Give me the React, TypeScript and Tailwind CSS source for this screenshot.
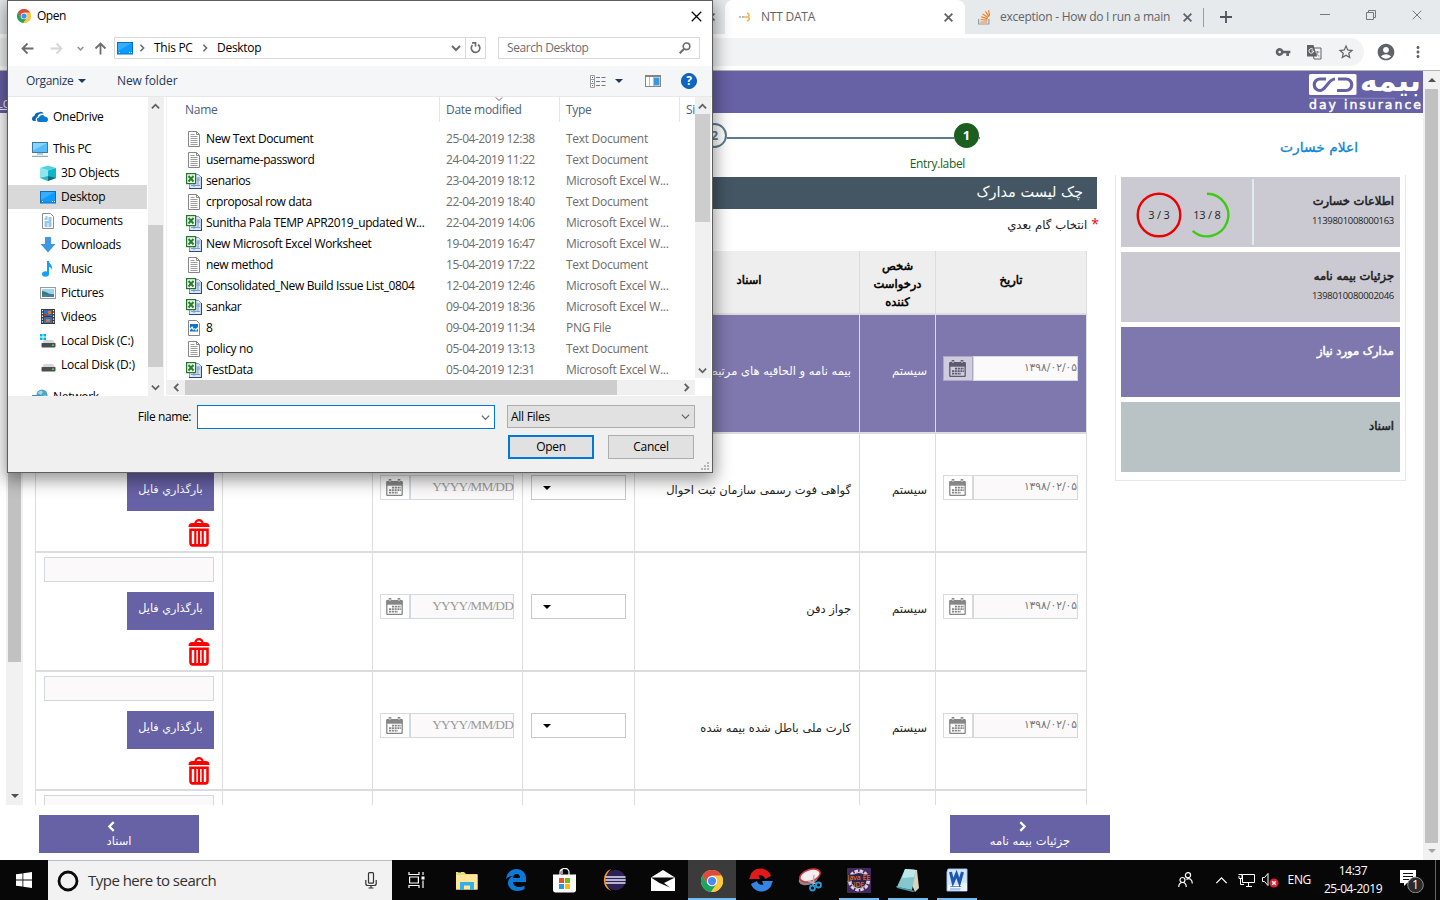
import React from 'react';
import { MdVpnKey, MdStarBorder, MdAccountCircle, MdMoreVert } from 'react-icons/md';

const fa = "font-['DejaVu_Sans',sans-serif]";
const faStrong = "font-['DejaVu_Sans',sans-serif] [-webkit-text-stroke:0.55px_currentColor]";

type ChevronProps = { dir: 'up' | 'down' | 'left' | 'right'; size?: number; color?: string; width?: number };

function Chevron({ dir, size = 8, color = '#606060', width = 2 }: ChevronProps) {
  const paths = {
    up: 'M1 7l4-4 4 4',
    down: 'M1 3l4 4 4-4',
    left: 'M7 1L3 5l4 4',
    right: 'M3 1l4 4-4 4',
  };
  return (
    <svg width={size} height={size} viewBox="0 0 10 10" fill="none" stroke={color} strokeWidth={width} className="shrink-0">
      <path d={paths[dir]} />
    </svg>
  );
}

function Caret({ up = false, color = '#505050', w = 8 }: { up?: boolean; color?: string; w?: number }) {
  return (
    <svg width={w} height={w / 2} viewBox="0 0 8 4" fill={color} className="shrink-0">
      <path d={up ? 'M0 4L4 0l4 4z' : 'M0 0h8L4 4z'} />
    </svg>
  );
}

function Cross({ size = 10, color = '#5f6368', width = 2 }: { size?: number; color?: string; width?: number }) {
  return (
    <svg width={size} height={size} viewBox="0 0 10 10" stroke={color} strokeWidth={width} className="shrink-0">
      <path d="M.7.7l8.6 8.6M9.3.7L.7 9.3" />
    </svg>
  );
}

function ChromeLogo({ size }: { size: number }) {
  return (
    <svg width={size} height={size} viewBox="0 0 24 24" className="shrink-0">
      <circle cx="12" cy="12" r="12" fill="#fbc93b" />
      <path d="M1.6 6A12 12 0 0 1 22.4 6L12 6.4 6.8 15z" fill="#dd4b3e" />
      <path d="M1.6 6A12 12 0 0 0 11 24l6-9-5 2.5-5-2.5z" fill="#1da362" />
      <path d="M12 6.4h10.6A12 12 0 0 1 11 24l6-9z" fill="#fbc93b" />
      <circle cx="12" cy="12" r="5.6" fill="#fff" />
      <circle cx="12" cy="12" r="4.5" fill="#4a8af4" />
    </svg>
  );
}

/* ---------- browser ---------- */

function TabStrip() {
  return (
    <div className="flex h-[34px] shrink-0 bg-[#e7eaed] text-[12px] tracking-[-0.22px] text-[#5f6368]">
      <div className="flex w-[725px] items-center justify-end rounded-br-lg pr-[10px]">
        <Cross size={8} />
      </div>
      <div className="flex w-[240px] items-center rounded-t-lg bg-white pr-[12px] pl-[14px]">
        <svg width="12" height="10" viewBox="0 0 12 10" className="mr-[10px]">
          <path d="M0 5h2M3 5h2" stroke="#b9bac6" strokeWidth="2" />
          <path d="M5 5h4M8 1c3 1 2 3 1 4 2 1 2 3-1 4" stroke="#f4b74a" strokeWidth="1.6" fill="none" />
        </svg>
        <span className="grow">NTT DATA</span>
        <Cross size={9} />
      </div>
      <div className="flex w-[238px] items-center pr-[11px] pl-[13px]">
        <svg width="12" height="15" viewBox="0 0 12 15" fill="none" className="mr-[10px]">
          <path d="M.6 9v5h10.3V9" stroke="#9a9c9e" strokeWidth="1.2" />
          <path d="M2.4 12h6.8M2.6 9.5l6.7.7M3.2 6.9l6.4 1.8M4.6 4l5.6 3.5M7.4 1.4l3.6 5.2M10.6.2l1 5.6" stroke="#f48024" strokeWidth="1.2" />
        </svg>
        <span className="w-[177px] overflow-hidden whitespace-nowrap tracking-[-0.26px]">exception - How do I run a main</span>
        <span className="ml-auto flex"><Cross size={9} /></span>
      </div>
      <div className="flex grow items-center">
        <span className="h-[19px] w-px bg-[#9a9da0]" />
        <svg width="12" height="12" viewBox="0 0 12 12" stroke="#505357" strokeWidth="1.8" className="ml-[16px]">
          <path d="M6 0v12M0 6h12" />
        </svg>
        <div className="mb-[5px] ml-auto flex items-center pr-[18px]">
          <span className="mr-[36px] h-px w-[10px] bg-[#777]" />
          <svg width="10" height="10" viewBox="0 0 10 10" fill="none" stroke="#777" className="mr-[36px]">
            <path d="M.5 2.5h7v7h-7zM2.5 2.5v-2h7v7h-2" />
          </svg>
          <Cross size={10} color="#777" width={1} />
        </div>
      </div>
    </div>
  );
}

function Toolbar() {
  return (
    <div className="flex h-[37px] shrink-0 items-center border-b border-[#b3b3b3] bg-white pr-[13px] text-[#5f6368]">
      <div className="flex h-[28px] w-[1364px] items-center justify-end rounded-r-full bg-[#f1f3f4] pr-[9px]">
        <MdVpnKey size={16} className="mr-[16px]" />
        <svg width="15" height="15" viewBox="0 0 15 15" className="mr-[15px]">
          <path d="M5 3h9v11H7z" fill="#f1f3f4" stroke="#5f6368" />
          <path d="M8.5 7h4M10.5 6v1c0 2-1 3-2 4M9 8c1 2 2 3 3.500 3" stroke="#80868b" fill="none" strokeWidth=".9" />
          <path d="M0 0h6.500L10 11.500H0z" fill="#5f6368" />
          <path d="M6 4.400A2.300 2.300 0 1 0 6.600 6H4.600" stroke="#fff" fill="none" />
        </svg>
        <MdStarBorder size={18} />
      </div>
      <MdAccountCircle size={20} className="ml-[12px]" />
      <MdMoreVert size={18} className="ml-auto" />
    </div>
  );
}

function InsuranceLogo() {
  return (
    <svg width="113" height="42" viewBox="0 0 113 42" className="mr-[1px]">
      <rect x="0" y="3" width="47.500" height="21" rx="1.500" fill="#fff" />
      <path d="M17 8h-6a5.500 5.500 0 0 0 0 11.500c6 0 8-11.500 15-11.500M29 8h8a5.700 5.700 0 0 1 0 11.500h-9" stroke="#6761a5" strokeWidth="3.200" fill="none" />
      <path d="M0 27.300h86" stroke="#8e89bd" strokeWidth="1" />
      <text x="112" y="20" direction="rtl" fontSize="30" fontWeight="bold" fill="#fff" textLength="61" lengthAdjust="spacingAndGlyphs" fontFamily="DejaVu Sans">بیمه</text>
      <text x="0" y="38" fontSize="12.500" fill="#fff" stroke="#fff" strokeWidth=".45" textLength="112" fontFamily="DejaVu Sans">day insurance</text>
    </svg>
  );
}

function Stepper() {
  return (
    <div className="flex h-[64px] shrink-0 flex-col pt-[10px] pr-[130px]">
      <div className="relative flex h-[25px] items-center justify-end">
        <div className="flex h-[25px] w-[25px] items-center justify-center rounded-full border-2 border-[#5c7b8c] text-[13px] font-bold text-[#5c7b8c]">2</div>
        <div className="mt-[4px] h-[2px] w-[227px] bg-[#5c7b8c]" />
        <div className="flex h-[25px] w-[25px] items-center justify-center rounded-full bg-[#1c5e20] text-[13px] font-bold text-white">1</div>
        <div className="mt-[4px] h-[2px] w-px bg-[#5c7b8c]" />
      </div>
      <div className="mt-[7px] pr-[15px] text-right text-[12px] leading-[18px] tracking-[-0.35px] text-[#1c5e20]">Entry.label</div>
    </div>
  );
}

function CalendarIcon({ color }: { color: string }) {
  return (
    <svg width="17" height="17" viewBox="0 0 17 17" className="mr-[2px] mb-px shrink-0">
      <path d="M.8 3.500h15.400v12c0 .6-.4 1-1 1H1.800c-.6 0-1-.4-1-1z" fill="none" stroke={color} strokeWidth="1.300" />
      <path d="M.5 2h16v4.700H.5z" fill={color} />
      <path d="M4 0v4M13 0v4" stroke={color} strokeWidth="2.600" />
      <path d="M4 1v2M13 1v2" stroke="#fff" strokeWidth=".8" />
      <path d="M6 8.700h9M3 11.200h12M3 13.700h9" stroke={color} strokeWidth="1.800" strokeDasharray="2.100 .7" />
    </svg>
  );
}

function DateField({ value, active = false, latin = false }: { value: string; active?: boolean; latin?: boolean }) {
  return (
    <div className="mt-[41px] flex h-[25px]">
      <div className={active ? 'flex w-[30px] shrink-0 items-center justify-center border border-[#aaa8c4] bg-[#cfcce0]' : 'flex w-[30px] shrink-0 items-center justify-center border border-[#dadada] bg-white'}>
        <CalendarIcon color={active ? '#5b596b' : '#868686'} />
      </div>
      <div className="flex grow items-start justify-end border border-[#d0d9df] bg-[#fbf9fa]">
        {latin ? (
          <span className="font-['Liberation_Serif',serif] text-[13.330px] leading-[21px] tracking-[-0.8px] text-[#9a9a9a]">{value}</span>
        ) : (
          <span dir="rtl" className="font-['DejaVu_Sans',sans-serif] text-[10.700px] leading-[21px] whitespace-nowrap text-[#777]">{value}</span>
        )}
      </div>
    </div>
  );
}

function TrashIcon() {
  return (
    <svg width="22" height="28" viewBox="0 0 22 28" className="mt-[8px] mr-[4px]">
      <path d="M7.500 5V4a3.500 2.800 0 0 1 7 0v1" fill="none" stroke="red" strokeWidth="2.200" />
      <path d="M.5 8C.5 5 2 4 4 4h14c2 0 3.500 1 3.500 4z" fill="red" />
      <path d="M2.500 10.800h17v13.200c0 1.500-.8 2.400-2.200 2.400H4.700c-1.400 0-2.200-.9-2.200-2.400z" fill="none" stroke="red" strokeWidth="2.600" />
      <path d="M7.300 11v15M11 11v15M14.700 11v15" stroke="red" strokeWidth="2.200" />
    </svg>
  );
}

type DocRow = { doc: string; active?: boolean };
const rows: DocRow[] = [
  { doc: 'بیمه نامه و الحاقیه های مرتبط', active: true },
  { doc: 'گواهی فوت رسمی سازمان ثبت احوال' },
  { doc: 'جواز دفن' },
  { doc: 'کارت ملی باطل شده بیمه شده' },
  { doc: '' },
];

const cell = 'border-r border-[#dcdcdc] shrink-0';

function TableRow({ doc, active = false }: DocRow) {
  const tone = active ? 'bg-[#7e78ae] text-white' : 'bg-white text-[#222]';
  return (
    <div className={`flex h-[119px] shrink-0 border-b-2 border-[#dcdcdc] text-[12px] ${tone}`}>
      <div className={`${cell} flex w-[187px] flex-col items-end px-[8px] pt-[4px]`}>
        <div className="h-[25px] w-[170px] border border-[#d0d9df] bg-[#fbf9fa]" />
        <div dir="rtl" className={`${fa} mt-[10px] h-[38px] w-[87px] bg-[#6761a5] text-center text-[11.200px] leading-[33px] whitespace-nowrap text-white`}>بارگذاري فايل</div>
        <TrashIcon />
      </div>
      <div className={`${cell} w-[150px]`} />
      <div className={`${cell} w-[150px] pr-[8px] pl-[7px]`}>
        <DateField value="YYYY/MM/DD" latin active={active} />
      </div>
      <div className={`${cell} w-[112px] pr-[8px] pl-[8px]`}>
        <div className="mt-[41px] flex h-[25px] items-center border border-[#c8c8c8] bg-white pl-[11px]"><Caret color="#000" /></div>
      </div>
      <div dir="rtl" className={`${cell} ${fa} w-[225px] overflow-hidden pt-[47px] pr-[8px] text-[11.500px] leading-[18px] whitespace-nowrap`}>{doc}</div>
      <div dir="rtl" className={`${cell} ${fa} w-[76px] pt-[47px] pr-[8px] text-[11.700px] leading-[18px]`}>{doc && 'سیستم'}</div>
      <div className={`${cell} w-[151px] pr-[8px] pl-[7px]`}>{doc && <DateField value="۱۳۹۸/۰۲/۰۵" active={active} />}</div>
    </div>
  );
}

function TableHead() {
  const head = `${cell} ${faStrong} flex items-center justify-center text-center text-[11.500px] text-black leading-[18px]`;
  return (
    <div dir="ltr" className="flex h-[64px] shrink-0 border-b-2 border-[#dcdcdc] bg-[#eee]">
      <div className={`${head} w-[187px]`} />
      <div className={`${head} w-[150px]`} />
      <div className={`${head} w-[150px]`} />
      <div className={`${head} w-[112px]`} />
      <div dir="rtl" className={`${head} w-[225px] pb-[4px] pl-[4px]`}>اسناد</div>
      <div dir="rtl" className={`${head} w-[76px] px-[8px] pt-[4px]`}>شخص درخواست کننده</div>
      <div dir="rtl" className={`${head} w-[151px] pb-[4px]`}>تاریخ</div>
    </div>
  );
}

function NavButton({ dir, label }: { dir: 'left' | 'right'; label: string }) {
  return (
    <div className="flex h-[38px] w-[160px] flex-col items-center bg-[#6761a5] pt-[5px] text-white">
      <span className="mr-[16px] flex h-[12px] items-center"><Chevron dir={dir} size={11} color="#fff" width={2} /></span>
      <span dir="rtl" className={`${fa} text-[11.500px] leading-[18px] whitespace-nowrap`}>{label}</span>
    </div>
  );
}

function SideCard({ title, number, tone, rings = false }: { title: string; number?: string; tone: string; rings?: boolean }) {
  return (
    <div className={`flex h-[70px] ${tone}`}>
      {rings && (
        <div className="mt-[2px] mb-[2px] flex w-[133px] items-center gap-[2px] border-r-2 border-[#dfeaf2] pt-[6px] pl-[15px]">
          <svg width="46" height="46" viewBox="0 0 46 46">
            <circle cx="23" cy="23" r="21.300" fill="none" stroke="#e90000" strokeWidth="2.400" />
            <text x="23" y="27" textAnchor="middle" fontSize="11" fill="#222" letterSpacing="-0.2">3 / 3</text>
          </svg>
          <svg width="46" height="46" viewBox="0 0 46 46">
            <path d="M23 1.700A21.300 21.300 0 1 1 8.700 38.800" fill="none" stroke="#3fcb12" strokeWidth="2.400" />
            <text x="23" y="27" textAnchor="middle" fontSize="11" fill="#222" letterSpacing="-0.2">13 / 8</text>
          </svg>
        </div>
      )}
      <div className="flex grow flex-col items-end pt-[15px] pr-[6px]">
        <span dir="rtl" className={`${faStrong} text-[11.500px] leading-[18px]`}>{title}</span>
        <span className="mt-[2px] text-[9.500px] leading-[18px] tracking-[-0.3px]">{number}</span>
      </div>
    </div>
  );
}

function Page() {
  return (
    <div className="flex h-[789px] shrink-0">
      <div className="flex w-[1423px] flex-col bg-white">
        <div className="flex h-[42px] shrink-0 items-start bg-[#6761a5]">
          <span className="mt-[25px] -ml-[3px] text-[11px] text-white underline">LO</span>
          <div className="ml-auto"><InsuranceLogo /></div>
        </div>
        <div className="flex grow">
          <div className="flex w-[1110px] shrink-0 flex-col">
            <div className="flex h-[692px] overflow-hidden">
              <div className="ml-[6px] flex w-[17px] flex-col items-center justify-between bg-[#f1f1f1] pb-[7px]">
                <div className="h-[549px] w-[13px] bg-[#c1c1c1]" />
                <Caret />
              </div>
              <div className="ml-[12px] flex grow flex-col">
                <Stepper />
                <div dir="rtl" className={`${fa} mr-[13px] h-[32px] shrink-0 bg-[#445664] pr-[14px] text-[14.500px] leading-[31px] text-white`}>چک لیست مدارک</div>
                <div dir="rtl" className="flex h-[42px] shrink-0 pt-[7px] pr-[11px] text-[#222]">
                  <span className="-mt-px text-[14px] leading-[18px] text-red-600">*</span>
                  <span className={`${fa} mr-[4px] text-[11.700px] leading-[18px]`}>انتخاب گام بعدي</span>
                </div>
                <div className="flex w-[1052px] flex-col border-l border-[#dcdcdc]">
                  <TableHead />
                  {rows.map((r, i) => <TableRow key={i} {...r} />)}
                </div>
              </div>
            </div>
            <div className="mt-[10px] flex justify-between pl-[39px]">
              <NavButton dir="left" label="اسناد" />
              <NavButton dir="right" label="جزئیات بیمه نامه" />
            </div>
          </div>
          <div className="ml-[4px] w-[292px]">
            <div dir="rtl" className="h-[62px] pt-[24px] pr-[48px] font-['DejaVu_Sans',sans-serif] text-[13.800px] leading-[20px] text-[#0b85d4] [-webkit-text-stroke:0.3px_currentColor]">اعلام خسارت</div>
            <div className="ml-px flex h-[306px] flex-col gap-[5px] border-x border-b border-[#e8e8e8] px-[5px] pt-[2px] text-[#222]">
              <SideCard title="اطلاعات خسارت" number="1139801008000163" tone="bg-[#cbcad2]" rings />
              <SideCard title="جزئیات بیمه نامه" number="1398010080002046" tone="bg-[#cbcad2]" />
              <SideCard title="مدارک مورد نیاز" tone="bg-[#7e78ae] text-white" />
              <SideCard title="اسناد" tone="bg-[#b9c3c6]" />
            </div>
          </div>
        </div>
      </div>
      <div className="flex w-[17px] flex-col items-center bg-[#f1f1f1] pt-[7px]">
        <Caret up />
        <div className="mt-[7px] mb-[6px] h-[754px] w-[13px] bg-[#c1c1c1]" />
        <Caret color="#a3a3a3" />
      </div>
    </div>
  );
}

/* ---------- file dialog ---------- */

function DesktopIcon() {
  return (
    <svg width="16" height="13" viewBox="0 0 16 13" className="shrink-0">
      <rect x=".5" y=".5" width="15" height="11.500" fill="#0d9bff" stroke="#0b6fc0" />
      <path d="M1 1h14L1 9z" fill="#35aeff" />
      <path d="M2 10.500h1M12 10.500h1M14 10.500h.8" stroke="#fff" />
    </svg>
  );
}

function DiskIcon({ windows = false }: { windows?: boolean }) {
  return (
    <svg width="16" height="16" viewBox="0 0 16 16">
      <path d="M4 7h9l2 3.500H2z" fill="#d4d6d8" />
      <rect x="1.500" y="10" width="14" height="4.500" rx=".8" fill="#4b4d50" />
      <rect x="12" y="11.500" width="2" height="1.300" fill="#58f04c" />
      {windows && <path d="M0 1h2.600v2.600H0zM3.400 1H6v2.600H3.400zM0 4.400h2.600V7H0zM3.400 4.400H6V7H3.400z" fill="#00b3f0" />}
    </svg>
  );
}

const placeIcons: Record<string, React.ReactNode> = {
  OneDrive: (
    <svg width="16" height="16" viewBox="0 0 16 16">
      <path d="M0 10c0-2 1.200-2.800 2.400-3C2.700 4.400 5 3 7 3.500 8 2 11 2.500 11.600 5 8 3.500 5.500 6 5.600 8 3.500 8.400 3.300 11 4 12 1 12.200 0 11.500 0 10z" fill="#0a64b8" />
      <path d="M5 11c-.4-1.500.6-2.600 2-2.600.3-2.600 4.600-3.600 5.800-.6C15 7.600 16 9 16 10.400S15 13 13.500 13H7c-1.200 0-2-.8-2-2z" fill="#0a78d4" />
    </svg>
  ),
  'This PC': (
    <svg width="16" height="16" viewBox="0 0 16 16">
      <rect x=".5" y="1.500" width="15" height="10" fill="#55bdf8" stroke="#3b7ba3" />
      <path d="M1 2h14L1 9.500z" fill="#85d3ff" />
      <path d="M5 13h6M0 15.300h16" stroke="#8296a3" />
    </svg>
  ),
  '3D Objects': (
    <svg width="16" height="16" viewBox="0 0 16 16">
      <path d="M0 3l8-2.500L16 3 8 5.500z" fill="#4fd3de" /><path d="M0 3l8 2.500V16l-8-3z" fill="#8fe5ec" /><path d="M16 3L8 5.500V16l8-3z" fill="#0fb4c8" /><path d="M8 11l8 2-8 3z" fill="#0b6e80" /><path d="M0 13l8-2v5z" fill="#35b4c2" />
    </svg>
  ),
  Desktop: <DesktopIcon />,
  Documents: (
    <svg width="16" height="16" viewBox="0 0 16 16">
      <path d="M2.500.5h8l3 3v12h-11z" fill="#fff" stroke="#8c8c8c" /><path d="M4.500 6h3M5.500 4h2M8.500 5h3M8.500 7h3M4.500 9h7M4.500 11h3M4.500 13h3M8.500 11h3M8.500 13h3" stroke="#2f8fd8" />
    </svg>
  ),
  Downloads: <svg width="16" height="16" viewBox="0 0 16 16"><path d="M5 0h6v7h4.500L8 15.500.5 7H5z" fill="#3f98e4" /></svg>,
  Music: (
    <svg width="16" height="16" viewBox="0 0 16 16">
      <ellipse cx="5.500" cy="13" rx="3.500" ry="2.800" fill="#14a0f5" /><path d="M7 0h2c0 3 4 3.500 3 9-.5-2-1.500-3-3-3v7H7z" fill="#14a0f5" />
    </svg>
  ),
  Pictures: (
    <svg width="16" height="16" viewBox="0 0 16 16">
      <rect x=".5" y="2.500" width="15" height="11" fill="#fff" stroke="#9a9a9a" /><path d="M2 4h12v8H2z" fill="#9fd2f4" /><path d="M2 6c4 0 7 4 12 3v3H2z" fill="#3d7b6c" /><path d="M2 10h12v2H2z" fill="#3f7fb8" />
    </svg>
  ),
  Videos: (
    <svg width="16" height="16" viewBox="0 0 16 16">
      <path d="M1 0h14v15H1z" fill="#3a3a3a" /><path d="M4 1h8v6H4zM4 8h8v6H4z" fill="#2f6fc9" /><path d="M8 2h3v3H8zM6 10h4v3H6z" fill="#d8762b" /><path d="M4 5h4v2H4z" fill="#a4422b" /><path d="M2.500 1v14M13.500 1v14" stroke="#fff" strokeWidth="1.200" strokeDasharray="1.300 1.500" />
    </svg>
  ),
  'Local Disk (C:)': <DiskIcon windows />,
  'Local Disk (D:)': <DiskIcon />,
  Network: (
    <svg width="16" height="16" viewBox="0 0 16 16">
      <circle cx="10" cy="6" r="5.500" fill="#4fa5d0" /><path d="M6 4c2-3 4-2 5-1l-2 3zM11 7l3-1-2 4z" fill="#a8dcd8" /><path d="M0 6h9v7H0z" fill="#3d8fc4" />
    </svg>
  ),
};

function Place({ name, indent = true }: { name: string; indent?: boolean }) {
  const selected = name === 'Desktop' ? 'bg-[#d9d9d9]' : '';
  const pad = indent ? 'pl-[32px] gap-[5px]' : 'pl-[24px] gap-[5px]';
  return (
    <div className={`flex h-[24px] shrink-0 items-center ${pad} ${selected}`}>
      <span className="flex w-[16px] justify-center">{placeIcons[name]}</span>
      <span className="whitespace-nowrap">{name}</span>
    </div>
  );
}

function FileIcon({ kind }: { kind: string }) {
  if (kind === 'Text Document') {
    return (
      <svg width="16" height="16" viewBox="0 0 16 16">
        <path d="M2.500.5h8l3 3v12h-11z" fill="#fff" stroke="#858585" /><path d="M10.500.5v3h3" fill="none" stroke="#858585" /><path d="M4.500 3.500h4M4.500 5.500h7M4.500 7.500h7M4.500 9.500h7M4.500 11.500h7M4.500 13.500h7" stroke="#9d9d9d" />
      </svg>
    );
  }
  if (kind === 'PNG File') {
    return (
      <svg width="16" height="16" viewBox="0 0 16 16">
        <path d="M2.500.5h8l3 3v12h-11z" fill="#fff" stroke="#858585" /><path d="M4 4h8v7.500H4z" fill="#0b72cf" /><path d="M4 8.500L6.200 6l1.600 3 1-1 1 1 2.200-2v1.500L10 11 8.500 9 7 10.500 6 8.200 4 10z" fill="#fff" />
      </svg>
    );
  }
  return (
    <svg width="16" height="16" viewBox="0 0 16 16">
      <path d="M3.500 1.500h9l3 3v11h-12z" fill="#dce8fa" stroke="#7d9acb" /><path d="M15.500 4v11.500H3" fill="none" stroke="#2a4880" strokeWidth="1.200" /><path d="M10.500 5h3.500M10.500 7h3.500M5 12.500h9M12 5v8M8 11v3" stroke="#7a9bd4" />
      <rect x=".6" y=".6" width="9" height="10" fill="#f3fbf2" stroke="#21762a" strokeWidth="1.200" /><path d="M2.500 3l5 5.500M7.500 3l-5 5.500" stroke="#23832c" strokeWidth="2" />
    </svg>
  );
}

const XL = 'Microsoft Excel W...';
const TXT = 'Text Document';
const files: [string, string, string][] = [
  ['New Text Document', '25-04-2019 12:38', TXT],
  ['username-password', '24-04-2019 11:22', TXT],
  ['senarios', '23-04-2019 18:12', XL],
  ['crproposal row data', '22-04-2019 18:40', TXT],
  ['Sunitha Pala TEMP APR2019_updated W...', '22-04-2019 14:06', XL],
  ['New Microsoft Excel Worksheet', '19-04-2019 16:47', XL],
  ['new method', '15-04-2019 17:22', TXT],
  ['Consolidated_New Build Issue List_0804', '12-04-2019 12:46', XL],
  ['sankar', '09-04-2019 18:36', XL],
  ['8', '09-04-2019 11:34', 'PNG File'],
  ['policy no', '05-04-2019 13:13', TXT],
  ['TestData', '05-04-2019 12:31', XL],
];

function Arrow({ dir, color }: { dir: 'left' | 'right' | 'up'; color: string }) {
  const d = { left: 'M12.500 6.500H1.500M6.500 1.500l-5 5 5 5', right: 'M.5 6.500h11M6.500 1.500l5 5-5 5', up: 'M6.500 12.500v-11M1.500 6.500l5-5 5 5' };
  return (
    <svg width="13" height="13" viewBox="0 0 13 13" fill="none" stroke={color} strokeWidth="1.800" className="shrink-0"><path d={d[dir]} /></svg>
  );
}

function FileDialog() {
  return (
    <div className="absolute top-0 left-[7px] flex h-[473px] w-[706px] flex-col border border-[#5e5e5e] bg-white text-[12px] tracking-[-0.28px] text-black shadow-[0_5px_16px_2px_rgba(0,0,0,0.42)]">
      <div className="flex h-[30px] shrink-0 items-center pr-[10px] pl-[9px]">
        <ChromeLogo size={14} />
        <span className="ml-[6px] grow tracking-[-0.5px]">Open</span>
        <Cross size={11} color="#000" width={1.100} />
      </div>
      <div className="flex h-[35px] shrink-0 items-center pb-[1px] pl-[13px]">
        <Arrow dir="left" color="#6d6d6d" />
        <span className="ml-[16px] flex"><Arrow dir="right" color="#d6d6d6" /></span>
        <span className="ml-[14px] flex"><Chevron dir="down" size={7} color="#8a8a8a" /></span>
        <span className="ml-[10px] flex"><Arrow dir="up" color="#6d6d6d" /></span>
        <div className="ml-[7px] flex h-[22px] w-[372px] items-center border border-[#d9d9d9] pl-[2px]">
          <DesktopIcon />
          <span className="ml-[5px] flex w-[16px]"><Chevron dir="right" size={8} color="#6b6b6b" /></span>
          <span className="w-[47px]">This PC</span>
          <span className="flex w-[16px]"><Chevron dir="right" size={8} color="#6b6b6b" /></span>
          <span>Desktop</span>
          <span className="mr-[4px] ml-auto flex"><Chevron dir="down" size={10} color="#6b6b6b" /></span>
          <div className="flex h-full w-[20px] items-center justify-center border-l border-[#d9d9d9]">
            <svg width="11" height="12" viewBox="0 0 11 12" fill="none" stroke="#6b6b6b" strokeWidth="1.700"><path d="M8 2.500A4.300 4.300 0 1 1 2.500 3M2 .9h3.500v3.600" /></svg>
          </div>
        </div>
        <div className="ml-[12px] flex h-[22px] w-[202px] items-center justify-between border border-[#d9d9d9] pr-[8px] pl-[8px] text-[#6d6d6d]">
          <span className="tracking-[-0.42px]">Search Desktop</span>
          <svg width="12" height="12" viewBox="0 0 12 12" fill="none" stroke="#6b6b6b" strokeWidth="1.600"><circle cx="7.500" cy="4.300" r="3.300" /><path d="M5.200 6.700L.7 11.300" strokeWidth="2" /></svg>
        </div>
      </div>
      <div className="flex h-[31px] shrink-0 items-center border-b border-[#e6e8ea] bg-[#f5f6f7] pl-[18px] text-[#1e395b]">
        <span className="w-[52px] tracking-[-0.35px]">Organize</span>
        <Caret color="#1e395b" />
        <span className="ml-[31px] tracking-[-0.1px]">New folder</span>
        <div className="ml-auto flex items-center pr-[15px]">
          <svg width="16" height="13" viewBox="0 0 16 13"><path d="M.5.5h4v12h-4zM.5 4.500h4M.5 8.500h4" fill="#fff" stroke="#999" /><path d="M6 2.500h10M6 6.500h10M6 10.500h10" stroke="#777" strokeDasharray="4 1.500" /><path d="M2 2.500h1" stroke="#44a" /><path d="M2 6.500h1" stroke="#28c" /><path d="M2 10.500h1" stroke="#d33" /></svg>
          <span className="ml-[9px] flex"><Caret color="#1e395b" /></span>
          <svg width="16" height="12" viewBox="0 0 16 12" className="ml-[22px]"><rect x=".5" y=".5" width="15" height="11" fill="#fff" stroke="#858585" /><path d="M0 1h16" stroke="#858585" strokeWidth="2" /><path d="M4.500 2v9M8.500 2v9" stroke="#bbb" /><path d="M9 2.500h5.500v8H9z" fill="#3997e0" /></svg>
          <svg width="16" height="16" viewBox="0 0 16 16" className="ml-[20px]"><circle cx="8" cy="8" r="7.600" fill="#0a67c7" stroke="#084b92" strokeWidth=".8" /><text x="8" y="12.200" fontSize="12" fontWeight="bold" fill="#fff" textAnchor="middle">?</text></svg>
        </div>
      </div>
      <div className="flex h-[299px] shrink-0">
        <div className="flex w-[139px] flex-col overflow-hidden pt-[8px]">
          <Place name="OneDrive" indent={false} />
          <div className="h-[8px] shrink-0" />
          <Place name="This PC" indent={false} />
          {['3D Objects', 'Desktop', 'Documents', 'Downloads', 'Music', 'Pictures', 'Videos', 'Local Disk (C:)', 'Local Disk (D:)'].map((n) => <Place key={n} name={n} />)}
          <div className="h-[8px] shrink-0" />
          <Place name="Network" indent={false} />
        </div>
        <div className="ml-[1px] flex w-[16px] flex-col items-center bg-[#f0f0f0] pt-[5px] pr-px">
          <Chevron dir="up" size={9} />
          <div className="mt-[114px] mb-[16px] h-[142px] w-full bg-[#cdcdcd]" />
          <Chevron dir="down" size={9} />
        </div>
        <div className="ml-[2px] flex w-[530px] flex-col overflow-hidden border-l border-[#f0f0f0]">
          <div className="flex h-[283px] shrink-0">
            <div className="flex w-[528px] flex-col overflow-hidden">
              <div className="flex h-[25px] shrink-0 items-center text-[#4c607a]">
                <span className="w-[272px] pl-[18px]">Name</span>
                <span className="relative flex h-full w-[120px] items-center border-l border-[#e5e5e5] pl-[6px]">
                  Date modified
                  <span className="absolute -top-[2px] left-[55px]"><Chevron dir="down" size={8} width={1.200} /></span>
                </span>
                <span className="flex h-full w-[120px] items-center border-l border-[#e5e5e5] pl-[6px]">Type</span>
                <span className="flex h-full items-center border-l border-[#e5e5e5] pl-[6px]">Si</span>
              </div>
              <div className="mt-[6px] flex flex-col">
                {files.map(([n, d, t]) => (
                  <div key={n} className="flex h-[21px] items-center whitespace-nowrap">
                    <span className="ml-[19px] flex w-[20px]"><FileIcon kind={t} /></span>
                    <span className="w-[240px] tracking-[-0.37px]">{n}</span>
                    <span className="w-[120px] tracking-[-0.48px] text-[#6d6d6d]">{d}</span>
                    <span className="text-[#6d6d6d]">{t}</span>
                  </div>
                ))}
              </div>
            </div>
          </div>
          <div className="flex h-[15px] w-[528px] shrink-0 items-center bg-[#f0f0f0] pl-[5px]">
            <Chevron dir="left" size={9} />
            <div className="ml-[4px] h-full w-[432px] bg-[#cdcdcd]" />
            <span className="ml-[65px] flex"><Chevron dir="right" size={9} /></span>
          </div>
        </div>
        <div className="-ml-[1px] flex h-[281px] w-[16px] flex-col items-center bg-[#f0f0f0] pt-[5px] pr-px">
          <Chevron dir="up" size={9} />
          <div className="mt-[3px] h-[108px] w-full bg-[#cdcdcd]" />
          <span className="mt-auto mb-[3px] flex"><Chevron dir="down" size={9} /></span>
        </div>
      </div>
      <div className="relative flex grow flex-col bg-[#f0f0f0] pt-[9px] pr-[17px]">
        <div className="flex h-[24px] items-start">
          <span className="w-[189px] pr-[6px] text-right leading-[23px] tracking-[-0.4px]">File name:</span>
          <div className="flex h-[24px] w-[298px] items-center justify-end border border-[#0078d7] bg-white pr-[4px]"><Chevron dir="down" size={9} width={1.300} /></div>
          <div className="ml-[12px] flex h-[23px] w-[188px] items-center justify-between border border-[#adadad] bg-[#e1e1e1] pr-[4px] pl-[3px]">
            All Files<Chevron dir="down" size={9} width={1.300} />
          </div>
        </div>
        <div className="mt-[6px] flex justify-end gap-[14px] pr-[1px] leading-none">
          <div className="flex h-[24px] w-[86px] items-center justify-center border-2 border-[#0078d7] bg-[#e1e1e1]">Open</div>
          <div className="flex h-[24px] w-[86px] items-center justify-center border border-[#adadad] bg-[#e1e1e1]">Cancel</div>
        </div>
        <svg width="8" height="8" viewBox="0 0 8 8" fill="#b5b5b5" className="absolute right-[3px] bottom-[2px]"><path d="M6 0h2v2H6zM3 3h2v2H3zM6 3h2v2H6zM0 6h2v2H0zM3 6h2v2H3zM6 6h2v2H6z" /></svg>
      </div>
    </div>
  );
}

/* ---------- taskbar ---------- */

function Slot({ children, open = false }: { children: React.ReactNode; open?: boolean }) {
  return (
    <div className="flex h-full w-[49px] flex-col items-center justify-between">
      <span className="flex h-[40px] items-center">{children}</span>
      <span className={open ? '-mt-[2px] h-[2px] w-[40px] shrink-0 bg-[#76b9ed]' : 'h-0'} />
    </div>
  );
}

function Taskbar() {
  return (
    <div className="flex h-[40px] shrink-0 bg-[#070707] text-white">
      <div className="flex w-[48px] items-center justify-center">
        <svg width="16" height="16" viewBox="0 0 16 16" fill="#fff"><path d="M0 2.300l6.500-.9v6.200H0zM7.300 1.300L16 0v7.600H7.300zM0 8.400h6.500v6.200L0 13.700zM7.300 8.400H16V16l-8.700-1.300z" /></svg>
      </div>
      <div className="flex w-[344px] items-center border-t border-[#bbb] bg-[#f2f2f2] pr-[15px] pl-[9px] text-[#303030]">
        <svg width="22" height="22" viewBox="0 0 22 22"><circle cx="11" cy="11" r="9" fill="none" stroke="#0a0a0a" strokeWidth="2.800" /></svg>
        <span className="ml-[9px] grow text-[15px] tracking-[-0.52px]">Type here to search</span>
        <svg width="12" height="17" viewBox="0 0 12 17" fill="none" stroke="#333" strokeWidth="1.200"><rect x="3.500" y=".7" width="5" height="10.500" rx="1" /><path d="M.8 8v3.500c0 1 .8 2 2 2h6.400c1.200 0 2-1 2-2V8M6 13.500V16M3.500 16h5" /></svg>
      </div>
      <div className="flex w-[48px] items-center justify-center">
        <svg width="17" height="16" viewBox="0 0 17 16" fill="none" stroke="#fff" strokeWidth="1.200"><path d="M1 0v2.500h10V0M1 16v-2.500h10V16M1.600 5h8.800v6H1.600zM15 0v3M15 8.500V16" /><path d="M13.500 4.500h3v3h-3z" fill="#fff" stroke="none" /></svg>
      </div>
      <div className="ml-[2px] flex">
        <Slot>
          <svg width="22" height="19" viewBox="0 0 22 19"><path d="M0 1h8l2 2h11.500v15.500H0z" fill="#f6d679" /><path d="M0 4h21.500v14.500H0z" fill="#ffe69a" /><path d="M2 1.500h3" stroke="#2aa96a" /><path d="M4 19v-8h14v8h-4v-4.500H8V19z" fill="#39aee6" /></svg>
        </Slot>
        <Slot>
          <svg width="20" height="22" viewBox="0 0 20 22"><path d="M0 10C1 3 6 0 10.500 0 16 0 20 4 20 9.500V13H7c0 3 3 5 6 5 2 0 4-.5 5.500-1.500V20C17 21 14 22 11.500 22 5 22 2 17.500 2 14c0-3 2-6 5-7C4 7 1.500 8 0 10zm7-1h7c0-2.500-1.200-4-3.500-4S7.200 6.800 7 9z" fill="#0a7ad8" /></svg>
        </Slot>
        <Slot>
          <svg width="23" height="25" viewBox="0 0 23 25"><path d="M7 7V4a4.500 3.500 0 0 1 9 0v3M9 6V3a3 2 0 0 1 6-1" fill="none" stroke="#fff" strokeWidth="1.200" /><path d="M0 6.500h23V22c0 1.500-1 2.500-2.500 2.500h-18C1 24.500 0 23.500 0 22z" fill="#fff" /><path d="M6 10h5v5H6z" fill="#f04f25" /><path d="M12 10h5v5h-5z" fill="#7eb900" /><path d="M6 16h5v5H6z" fill="#1ba0e8" /><path d="M12 16h5v5h-5z" fill="#fdb813" /></svg>
        </Slot>
        <Slot>
          <svg width="24" height="24" viewBox="0 0 24 24"><path d="M9 1A12 12 0 0 0 9 23 15 15 0 0 1 9 1z" fill="#f79422" /><circle cx="13.500" cy="12" r="10.300" fill="#2c2255" /><path d="M3.500 9h20M3.300 12h20.400M3.500 15h20" stroke="#e6e3f3" strokeWidth="1.600" /></svg>
        </Slot>
        <Slot>
          <svg width="24" height="21" viewBox="0 0 24 21"><path d="M0 7.500L12 0l12 7.500V21H0z" fill="#fff" /><path d="M0 7.500h24L13 13l6 4.500L8.500 13 0 7.500z" fill="#0b0b0b" /></svg>
        </Slot>
        <div className="ml-px flex h-full w-[48px] flex-col items-center bg-[#3b3b3b]">
          <span className="flex h-[38px] items-center pt-[3px]"><ChromeLogo size={22} /></span>
          <span className="h-[2px] w-full bg-[#76b9ed]" />
        </div>
        <Slot>
          <svg width="24" height="24" viewBox="0 0 24 24">
            <path d="M1 9C2 3 8-.5 14 .8c4 .9 7 3.700 8 7.200l-6 3c-.5-3-3.500-4.500-6.500-3.500L11 11H0z" fill="#df1a1a" />
            <path d="M23 15c-1 6-7 9.500-13 8.200-4-.9-7-3.700-8-7.200l6-3c.5 3 3.500 4.500 6.500 3.500L13 13h11z" fill="#3585e4" />
          </svg>
        </Slot>
        <Slot>
          <svg width="24" height="24" viewBox="0 0 24 24"><ellipse cx="10.500" cy="11" rx="10" ry="6" fill="#888" transform="rotate(-18 10 11)" /><ellipse cx="12" cy="7.500" rx="10.500" ry="5.800" fill="#f4eeee" stroke="#d9343a" strokeWidth="1.500" transform="rotate(-18 12 7.500)" /><path d="M16 7l-1 10M10 13l9 3" stroke="#aeb6bc" strokeWidth="1.500" /><circle cx="14.500" cy="20" r="2.500" fill="none" stroke="#2b9bd8" strokeWidth="1.800" /><circle cx="20.500" cy="17" r="2.500" fill="none" stroke="#2b9bd8" strokeWidth="1.800" /></svg>
        </Slot>
        <Slot open>
          <svg width="24" height="25" viewBox="0 0 24 25">
            <rect width="24" height="25" rx="1" fill="#45285f" />
            <circle cx="12" cy="12.500" r="9.500" fill="none" stroke="#d4d4da" strokeWidth="3" strokeDasharray="3.500 1.500" />
            <circle cx="12" cy="12.500" r="8" fill="#33204a" stroke="#d4d4da" />
            <rect y="6.500" width="24" height="6" fill="#33204a" />
            <text x="12" y="12" textAnchor="middle" fontSize="6.500" fill="#f78b1f" textLength="23" lengthAdjust="spacingAndGlyphs">Java EE</text>
            <text x="12" y="19" textAnchor="middle" fontSize="7" fill="#f78b1f">IDE</text>
          </svg>
        </Slot>
        <Slot open>
          <svg width="23" height="24" viewBox="0 0 23 24"><path d="M9 1l12 1 2 18-4 4z" fill="#d9d3bd" /><path d="M9 1l11 1-4 20-15-3z" fill="#86c6ce" /><path d="M9 1l11 1-2 7L6 10z" fill="#bce8ea" /><path d="M0 18l15 4 4 1-2 1-16-4z" fill="#4aa0ad" /></svg>
        </Slot>
        <Slot open>
          <svg width="22" height="24" viewBox="0 0 22 24"><path d="M2 1h19v22H1V4z" fill="#fff" stroke="#8bb4e6" /><path d="M4 18.500h12M4 21h12" stroke="#5f95dc" /><rect x="2" y="2" width="18" height="15" fill="#d6e6fa" /><path d="M4.500 4l2.500 10.500L10.500 6l3 8.500L16.500 4" fill="none" stroke="#1b57b5" strokeWidth="3" /><path d="M16 15h5v8h-7z" fill="#eaf2fc" /></svg>
        </Slot>
      </div>
      <div className="ml-auto flex items-center">
        <svg width="15" height="16" viewBox="0 0 15 16" fill="none" stroke="#fff" strokeWidth="1.200" className="mr-[22px]"><circle cx="4.500" cy="8" r="2.500" /><path d="M.7 15c.3-6 7.300-6 7.600 0" /><circle cx="10" cy="3.300" r="2.600" /><path d="M8.500 7.500c3-2 5.800 0 5.800 4" /></svg>
        <Chevron dir="up" size={13} color="#fff" width={1} />
        <svg width="17" height="14" viewBox="0 0 17 14" fill="none" stroke="#fff" className="ml-[10px]"><path d="M4.500 1.500h12v8h-12zM8 13.500h6M10.500 10v3M.5 1.500h3.500M1 3v2.500h3V1M2.500 6v5.500H6" /></svg>
        <svg width="18" height="16" viewBox="0 0 18 16" fill="none" stroke="#fff" className="ml-[7px]"><path d="M.5 5.500h2l3.500-4v12l-3.500-4h-2z" /><circle cx="12" cy="11" r="4.600" fill="#d8232f" stroke="none" /><path d="M10.200 9.200l3.600 3.600M13.800 9.200l-3.600 3.600" strokeWidth="1.300" /></svg>
        <span className="ml-[8px] text-[12px] tracking-[-0.35px]">ENG</span>
        <div className="ml-[11px] flex w-[62px] flex-col items-center text-[12px] leading-[18px] tracking-[-0.45px] whitespace-nowrap">
          <span>14:37</span><span>25-04-2019</span>
        </div>
        <svg width="26" height="26" viewBox="0 0 26 26" className="mr-[10px] ml-[15px]"><path d="M1 3h16v13H8l-3 3v-3H1z" fill="#fff" /><path d="M4 6.500h10M4 9.500h10M4 12.500h6" stroke="#111" /><circle cx="16.500" cy="18" r="7.800" fill="#2a2a2a" stroke="#8c8c8c" /><text x="16.500" y="22" fontSize="12" fill="#fff" textAnchor="middle">1</text></svg>
        <span className="mr-[4px] h-[40px] w-px bg-[#666]" />
      </div>
    </div>
  );
}

export default function App() {
  return (
    <div className="relative flex h-[900px] w-[1440px] flex-col overflow-hidden bg-white font-['Open_Sans','Noto_Sans','DejaVu_Sans',sans-serif]">
      <TabStrip />
      <Toolbar />
      <Page />
      <Taskbar />
      <FileDialog />
    </div>
  );
}
